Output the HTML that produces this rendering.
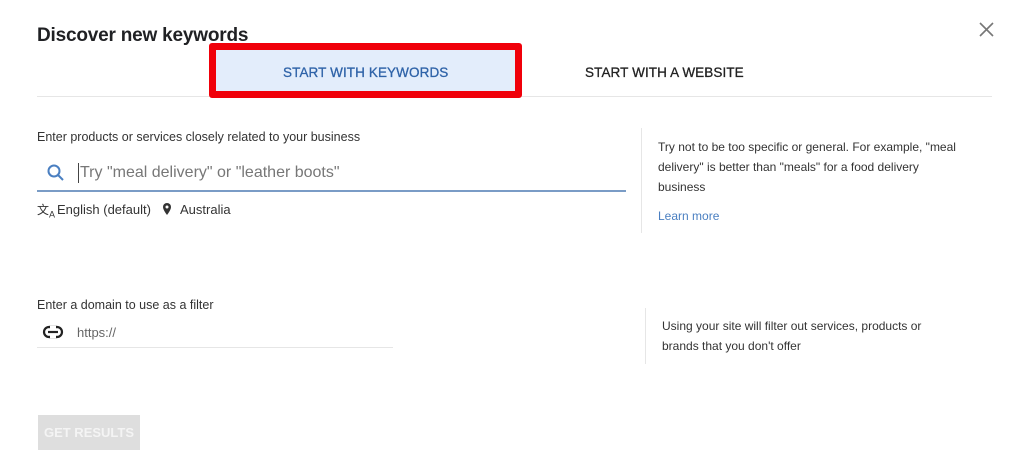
<!DOCTYPE html>
<html><head><style>
body{margin:0;width:1024px;height:461px;background:#fff;font-family:"Liberation Sans",sans-serif;position:relative;overflow:hidden;color:#3c4043}
.a{position:absolute;white-space:nowrap}
</style></head><body>
<div class="a" style="left:37px;top:25px;font-size:19px;color:#202124;font-weight:bold;letter-spacing:-.2px">Discover new keywords</div>
<svg class="a" style="left:979px;top:22px" width="15" height="15" viewBox="0 0 15 15"><path d="M1 1l13 13M14 1L1 14" stroke="#777" stroke-width="1.6"/></svg>
<div class="a" style="left:37px;top:96px;width:955px;height:1px;background:#e6e6e6"></div>
<div class="a" style="left:209px;top:43px;width:299px;height:41px;border:7px solid #f0000a;border-radius:3px;background:#e3edfb"></div>
<div class="a" style="left:283px;top:65px;font-size:13.5px;color:#2f63a8;letter-spacing:.1px;-webkit-text-stroke:.3px #2f63a8">START WITH KEYWORDS</div>
<div class="a" style="left:585px;top:65px;font-size:13.5px;color:#222;letter-spacing:.1px;-webkit-text-stroke:.3px #222">START WITH A WEBSITE</div>
<div class="a" style="left:37px;top:130px;font-size:12.5px;color:#333">Enter products or services closely related to your business</div>
<svg class="a" style="left:46px;top:163px" width="20" height="20" viewBox="0 0 20 20"><circle cx="8" cy="8" r="5.5" fill="none" stroke="#4a7fc1" stroke-width="2"/><path d="M12 12l5 5" stroke="#4a7fc1" stroke-width="2"/></svg>
<div class="a" style="left:78px;top:163px;width:1px;height:20px;background:#444"></div>
<div class="a" style="left:80px;top:164px;font-size:16px;color:#777">Try "meal delivery" or "leather boots"</div>
<div class="a" style="left:37px;top:190px;width:589px;height:2px;background:#7a9cc6"></div>
<div class="a" style="left:37px;top:201px;font-size:12px;color:#333">文<sub style="font-size:9px">A</sub></div>
<div class="a" style="left:57px;top:202px;font-size:13px;color:#333">English (default)</div>
<svg class="a" style="left:161px;top:202px" width="12" height="14" viewBox="0 0 12 14"><path d="M6 1a4 4 0 0 0-4 4c0 3 4 8 4 8s4-5 4-8a4 4 0 0 0-4-4z" fill="#333"/><circle cx="6" cy="5" r="1.5" fill="#fff"/></svg>
<div class="a" style="left:180px;top:202px;font-size:13px;color:#333">Australia</div>
<div class="a" style="left:641px;top:128px;width:1px;height:105px;background:#e6e6e6"></div>
<div class="a" style="left:658px;top:137px;font-size:12px;line-height:20px;color:#333;white-space:normal;width:305px">Try not to be too specific or general. For example, "meal delivery" is better than "meals" for a food delivery business</div>
<div class="a" style="left:658px;top:209px;font-size:12px;color:#4a7fc1">Learn more</div>
<div class="a" style="left:37px;top:298px;font-size:12.5px;color:#333">Enter a domain to use as a filter</div>
<svg class="a" style="left:42px;top:325px" width="22" height="14" viewBox="0 0 22 14"><rect x="2" y="2" width="18" height="10" rx="5" fill="none" stroke="#222" stroke-width="2.2"/><rect x="8" y="1" width="6" height="12" fill="#fff"/><path d="M6 7h10" stroke="#222" stroke-width="2.2"/><path d="M8 2h-1M15 2h-1M8 12h-1M15 12h-1" stroke="#222" stroke-width="2.2"/></svg>
<div class="a" style="left:77px;top:325px;font-size:13px;color:#666">https://</div>
<div class="a" style="left:37px;top:347px;width:356px;height:1px;background:#e6e6e6"></div>
<div class="a" style="left:645px;top:308px;width:1px;height:56px;background:#e6e6e6"></div>
<div class="a" style="left:662px;top:316px;font-size:12px;line-height:20px;color:#333;white-space:normal;width:290px">Using your site will filter out services, products or brands that you don't offer</div>
<div class="a" style="left:38px;top:415px;width:102px;height:35px;background:#dedede;color:#f4f4f4;font-size:13px;font-weight:bold;text-align:center;line-height:35px">GET RESULTS</div>
</body></html>
